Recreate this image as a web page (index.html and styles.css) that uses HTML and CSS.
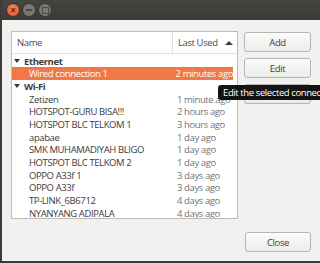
FILE: index.html
```html
<!DOCTYPE html>
<html lang="en">
<head>
  <meta charset="UTF-8">
  <title>Network Connections</title>
  <link rel="stylesheet" href="styles.css">
</head>
<body>
  <div class="window">
    <div class="titlebar">
      <span class="wbtn close-btn">&times;</span>
      <span class="wbtn min-btn"></span>
      <span class="wbtn max-btn"></span>
    </div>
    <div class="content">
      <div class="main">
        <div class="tree">
          <div class="tree-header">
            <div class="col-name">Name</div>
            <div class="col-used">Last Used <span class="sort-arrow"></span></div>
          </div>
          <div class="tree-body">
            <div class="row group"><span class="expander"></span>Ethernet</div>
            <div class="row child selected"><span class="name">Wired connection 1</span><span class="used">2 minutes ago</span></div>
            <div class="row group"><span class="expander"></span>Wi-Fi</div>
            <div class="row child"><span class="name">Zetizen</span><span class="used">1 minute ago</span></div>
            <div class="row child"><span class="name">HOTSPOT-GURU BISA!!!</span><span class="used">2 hours ago</span></div>
            <div class="row child"><span class="name">HOTSPOT BLC TELKOM 1</span><span class="used">3 hours ago</span></div>
            <div class="row child"><span class="name">apabae</span><span class="used">1 day ago</span></div>
            <div class="row child"><span class="name">SMK MUHAMADIYAH BLIGO</span><span class="used">1 day ago</span></div>
            <div class="row child"><span class="name">HOTSPOT BLC TELKOM 2</span><span class="used">1 day ago</span></div>
            <div class="row child"><span class="name">OPPO A33f 1</span><span class="used">3 days ago</span></div>
            <div class="row child"><span class="name">OPPO A33f</span><span class="used">3 days ago</span></div>
            <div class="row child"><span class="name">TP-LINK_6B6712</span><span class="used">4 days ago</span></div>
            <div class="row child"><span class="name">NYANYANG ADIPALA</span><span class="used">4 days ago</span></div>
          </div>
        </div>
        <div class="side-buttons">
          <button class="btn">Add</button>
          <button class="btn">Edit</button>
          <button class="btn">Delete</button>
        </div>
      </div>
      <div class="footer">
        <button class="btn">Close</button>
      </div>
    </div>
    <div class="tooltip">Edit the selected connection</div>
  </div>
</body>
</html>
```

FILE: styles.css
```css
body, html {
  margin: 0;
  padding: 0;
  height: 100%;
  overflow: hidden;
  font-family: "Open Sans", "Noto Sans", sans-serif;
  font-size: 9.5px;
  letter-spacing: -0.4px;
  background-color: #3c3b37;
}

.window {
  position: relative;
  width: 318px;
  height: 261px;
  border-left: 2px solid #3c3b37;
  border-bottom: 2px solid #3c3b37;
  display: flex;
  flex-direction: column;
}

.titlebar {
  height: 20px;
  background: linear-gradient(#45443f, #3c3b37);
  display: flex;
  align-items: center;
  gap: 2px;
  padding-left: 4px;
}

.wbtn {
  width: 12px;
  height: 12px;
  border-radius: 50%;
  background: #7a7873;
  border: 1px solid #34332f;
  display: flex;
  align-items: center;
  justify-content: center;
  font-size: 10px;
  line-height: 1;
  color: #3c3b37;
}

.close-btn {
  background: radial-gradient(circle at 50% 35%, #f5845a, #e0512a);
  color: #5a2212;
  font-weight: bold;
}

.min-btn::after {
  content: "";
  width: 6px;
  height: 2px;
  background: #4a4944;
}

.max-btn::after {
  content: "";
  width: 5px;
  height: 5px;
  border: 1px solid #4a4944;
}

.content {
  flex: 1;
  background-color: #f2f1f0;
  padding: 11px 9px 9px 9px;
  display: flex;
  flex-direction: column;
}

.main {
  display: flex;
  gap: 6px;
  height: 188px;
}

.tree {
  width: 227px;
  box-sizing: border-box;
  border: 1px solid #bcbcb9;
  background: #ffffff;
  overflow: hidden;
}

.tree-header {
  display: flex;
  height: 21px;
  border-bottom: 1px solid #e2e2e0;
  color: #4c4c4c;
  white-space: nowrap;
}

.col-name {
  width: 161px;
  padding-left: 5px;
  box-sizing: border-box;
  display: flex;
  align-items: center;
  border-right: 1px solid #e2e2e0;
}

.col-used {
  flex: 1;
  padding-left: 5px;
  display: flex;
  align-items: center;
  gap: 7px;
}

.sort-arrow {
  width: 0;
  height: 0;
  border-left: 4px solid transparent;
  border-right: 4px solid transparent;
  border-bottom: 4px solid #3c3c3c;
}

.tree-body {
  padding-top: 0.7px;
}

.row {
  height: 12.7px;
  display: flex;
  align-items: center;
  color: #3c3c3c;
  width: 221px;
  white-space: nowrap;
}

.group {
  font-weight: bold;
  padding-left: 2px;
  box-sizing: border-box;
}

.expander {
  width: 0;
  height: 0;
  border-left: 3px solid transparent;
  border-right: 3px solid transparent;
  border-top: 4px solid #3c3c3c;
  margin-right: 4px;
}

.child .name {
  width: 165px;
  padding-left: 17px;
  box-sizing: border-box;
}

.child .used {
  color: #6f7477;
}

.selected {
  background: #f07746;
}

.selected .name,
.selected .used {
  color: #ffffff;
}

.side-buttons {
  width: 67px;
  display: flex;
  flex-direction: column;
  gap: 6px;
  padding-top: 1px;
}

.btn {
  height: 20px;
  width: 67px;
  border: 1px solid #b5b5b1;
  border-radius: 3px;
  background: linear-gradient(#fbfbfa, #ececea);
  font-family: inherit;
  font-size: 9.5px;
  letter-spacing: -0.4px;
  color: #3c3c3c;
  padding: 0;
}

.footer {
  margin-top: 13px;
  display: flex;
  justify-content: flex-end;
}

.footer .btn {
  width: 66px;
}

.tooltip {
  position: absolute;
  left: 216px;
  top: 85px;
  height: 15px;
  padding: 0 5px;
  background: rgba(0, 0, 0, 0.92);
  color: #ffffff;
  border-radius: 3px;
  white-space: nowrap;
  display: flex;
  align-items: center;
}
```
